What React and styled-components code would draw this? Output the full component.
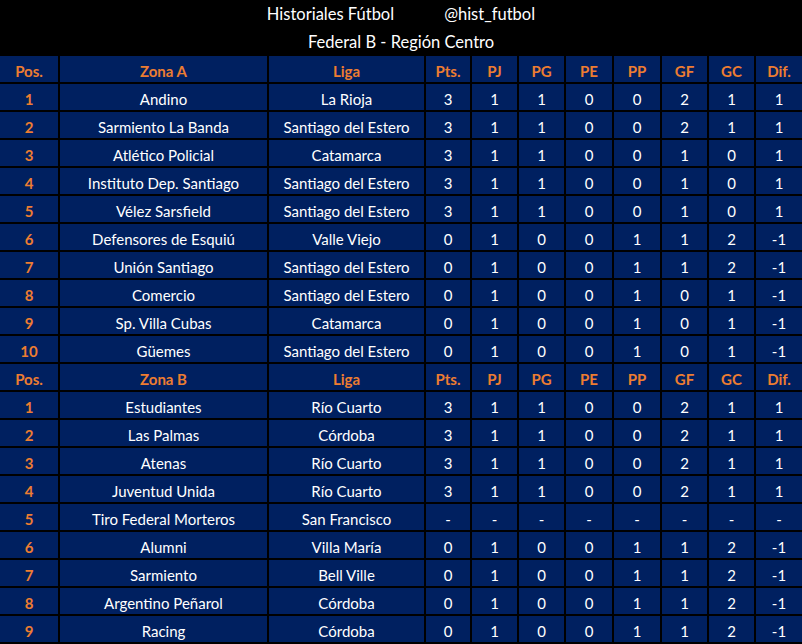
import React from "react";
import styled, { createGlobalStyle } from "styled-components";

const Global = createGlobalStyle`
  html, body {
    margin: 0;
    padding: 0;
    background: #000;
  }
  body {
    font-family: Lato, "Open Sans", "Liberation Sans", sans-serif;
  }
`;

const COLS = "58px 207px 155px 44px 45px 45px 46px 46px 45px 45px 46px";
const STATS = ["Pts.", "PJ", "PG", "PE", "PP", "GF", "GC", "Dif."];

const zonaA = [
  ["Andino", "La Rioja", "3 1 1 0 0 2 1 1"],
  ["Sarmiento La Banda", "Santiago del Estero", "3 1 1 0 0 2 1 1"],
  ["Atlético Policial", "Catamarca", "3 1 1 0 0 1 0 1"],
  ["Instituto Dep. Santiago", "Santiago del Estero", "3 1 1 0 0 1 0 1"],
  ["Vélez Sarsfield", "Santiago del Estero", "3 1 1 0 0 1 0 1"],
  ["Defensores de Esquiú", "Valle Viejo", "0 1 0 0 1 1 2 -1"],
  ["Unión Santiago", "Santiago del Estero", "0 1 0 0 1 1 2 -1"],
  ["Comercio", "Santiago del Estero", "0 1 0 0 1 0 1 -1"],
  ["Sp. Villa Cubas", "Catamarca", "0 1 0 0 1 0 1 -1"],
  ["Güemes", "Santiago del Estero", "0 1 0 0 1 0 1 -1"],
];

const zonaB = [
  ["Estudiantes", "Río Cuarto", "3 1 1 0 0 2 1 1"],
  ["Las Palmas", "Córdoba", "3 1 1 0 0 2 1 1"],
  ["Atenas", "Río Cuarto", "3 1 1 0 0 2 1 1"],
  ["Juventud Unida", "Río Cuarto", "3 1 1 0 0 2 1 1"],
  ["Tiro Federal Morteros", "San Francisco", "- - - - - - - -"],
  ["Alumni", "Villa María", "0 1 0 0 1 1 2 -1"],
  ["Sarmiento", "Bell Ville", "0 1 0 0 1 1 2 -1"],
  ["Argentino Peñarol", "Córdoba", "0 1 0 0 1 1 2 -1"],
  ["Racing", "Córdoba", "0 1 0 0 1 1 2 -1"],
];

export default function App() {
  return (
    <Page>
      <Global />
      <Title>
        <TitleLine>
          <span>Historiales Fútbol</span>
          <span>@hist_futbol</span>
        </TitleLine>
        <TitleLine>Federal B - Región Centro</TitleLine>
      </Title>
      <Table>
        <Zone name="Zona A" rows={zonaA} />
        <Zone name="Zona B" rows={zonaB} />
      </Table>
    </Page>
  );
}

function Zone({ name, rows }) {
  return (
    <>
      <Cell $head>Pos.</Cell>
      <Cell $head>{name}</Cell>
      <Cell $head>Liga</Cell>
      {STATS.map((s) => (
        <Cell $head key={s}>
          {s}
        </Cell>
      ))}
      {rows.map(([team, liga, stats], i) => (
        <React.Fragment key={team}>
          <Cell $head>{i + 1}</Cell>
          <Cell>{team}</Cell>
          <Cell>{liga}</Cell>
          {stats.split(" ").map((v, j) => (
            <Cell key={j}>{v}</Cell>
          ))}
        </React.Fragment>
      ))}
    </>
  );
}

const Page = styled.div`
  width: 802px;
  height: 644px;
  background: #000;
  overflow: hidden;
`;

const Title = styled.header`
  display: flex;
  flex-direction: column;
  color: #fff;
  font-size: 16.5px;
`;

const TitleLine = styled.div`
  height: 28px;
  display: flex;
  align-items: center;
  justify-content: center;
  gap: 50px;
`;

const Table = styled.div`
  display: grid;
  grid-template-columns: ${COLS};
  grid-auto-rows: 26px;
  gap: 2px;
  padding-bottom: 2px;
  background: #000;
`;

const Cell = styled.div`
  background: #002060;
  display: flex;
  align-items: center;
  justify-content: center;
  padding-top: 3px;
  box-sizing: border-box;
  white-space: nowrap;
  font-size: 15px;
  color: ${(p) => (p.$head ? "#ed7d31" : "#fff")};
  font-weight: ${(p) => (p.$head ? 700 : 400)};
`;
